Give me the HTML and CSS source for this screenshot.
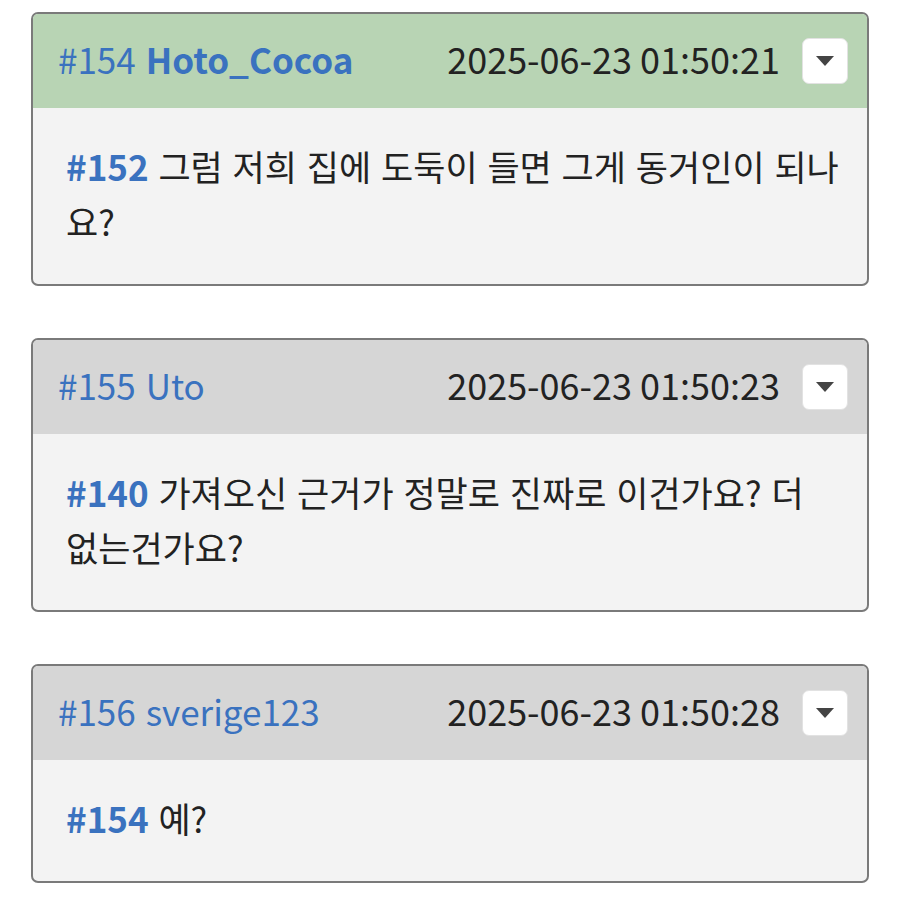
FILE: index.html
```html
<!DOCTYPE html>
<html lang="ko">
<head>
<meta charset="utf-8">
<link rel="stylesheet" href="styles.css">
</head>
<body>
<div class="list">
  <div class="card">
    <div class="head head-green">
      <span class="num">#154</span>
      <span class="name bold">Hoto_Cocoa</span>
      <span class="time" lang="en">2025-06-23 01:50:21</span>
      <span class="btn"><svg width="18" height="10" viewBox="0 0 18 10"><path d="M0 0H18L9 10Z" fill="#444"/></svg></span>
    </div>
    <div class="body"><span class="ref">#152</span> 그럼 저희 집에 도둑이 들면 그게 동거인이 되나요?</div>
  </div>
  <div class="card">
    <div class="head">
      <span class="num">#155</span>
      <span class="name">Uto</span>
      <span class="time" lang="en">2025-06-23 01:50:23</span>
      <span class="btn"><svg width="18" height="10" viewBox="0 0 18 10"><path d="M0 0H18L9 10Z" fill="#444"/></svg></span>
    </div>
    <div class="body"><span class="ref">#140</span> 가져오신 근거가 정말로 진짜로 이건가요? 더 없는건가요?</div>
  </div>
  <div class="card">
    <div class="head">
      <span class="num">#156</span>
      <span class="name">sverige123</span>
      <span class="time" lang="en">2025-06-23 01:50:28</span>
      <span class="btn"><svg width="18" height="10" viewBox="0 0 18 10"><path d="M0 0H18L9 10Z" fill="#444"/></svg></span>
    </div>
    <div class="body"><span class="ref">#154</span> 예?</div>
  </div>
</div>
</body>
</html>
```
FILE: styles.css
```css
html, body {
  margin: 0;
  background: #fff;
}
body {
  font-family: "Noto Sans CJK KR", "Noto Sans", sans-serif;
  color: #222;
}
.list {
  padding: 12px 31px;
  display: flex;
  flex-direction: column;
  gap: 52px;
}
.card {
  border: 2px solid #7a7a7a;
  border-radius: 7px;
  overflow: hidden;
  background: #f3f3f3;
}
.head {
  height: 94px;
  box-sizing: border-box;
  display: flex;
  align-items: center;
  padding: 0 19px 6px 25px;
  background: #d6d6d6;
  font-size: 35px;
  line-height: 1;
}
.head-green {
  background: #b8d4b4;
}
.num {
  color: #3a72bf;
  margin-right: 10px;
}
.name {
  color: #3a72bf;
}
.bold {
  font-weight: 700;
}
.time {
  margin-left: auto;
  color: #222;
  font-size: 36px;
}
.btn {
  width: 46px;
  height: 46px;
  margin-left: 22px;
  margin-top: 6px;
  background: #fff;
  border: 1px solid #e2e2e2;
  box-sizing: border-box;
  border-radius: 7px;
  display: flex;
  align-items: center;
  justify-content: center;
}
.btn svg {
  display: block;
}
.body {
  padding: 30px 27px 36px 33px;
  font-size: 35px;
  line-height: 55px;
  color: #222;
}
.ref {
  color: #3a72bf;
  font-weight: 700;
}
```
